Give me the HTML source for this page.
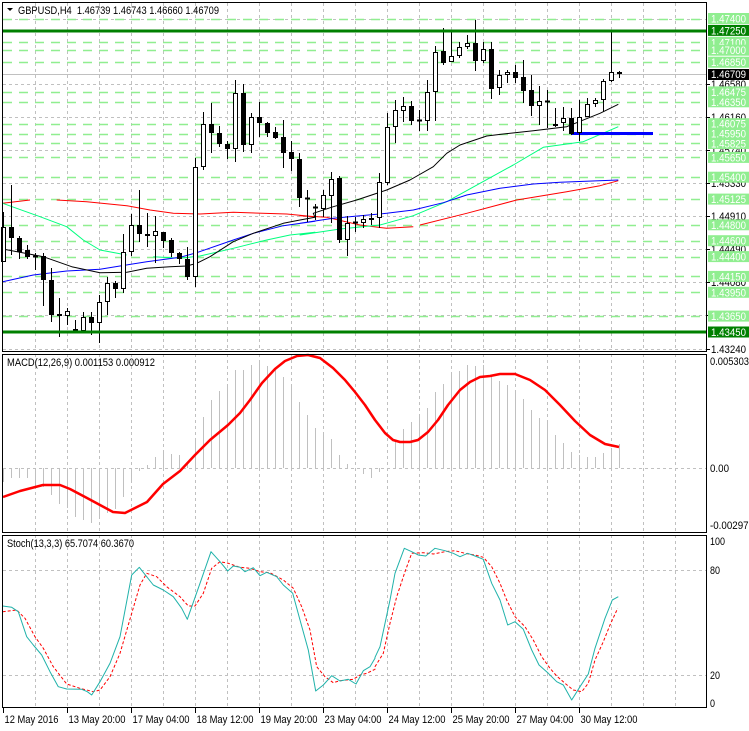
<!DOCTYPE html>
<html><head><meta charset="utf-8">
<style>
html,body{margin:0;padding:0;background:#fff;}
body{width:749px;height:731px;overflow:hidden;}
svg{display:block;font-family:"Liberation Sans",sans-serif;font-size:11px;}
</style></head>
<body>
<svg id="c" width="749" height="731" xmlns="http://www.w3.org/2000/svg"></svg>
<script>
var s=[];
function yp(p){return 18.5+(1.474-p)/0.000126;}
function L(x1,y1,x2,y2,c,w,d){s.push('<line x1="'+x1+'" y1="'+y1+'" x2="'+x2+'" y2="'+y2+'" stroke="'+c+'" stroke-width="'+(w||1)+'"'+(d?' stroke-dasharray="'+d+'"':'')+'/>');}
function T(x,y,t,c,len){s.push('<text x="'+x+'" y="'+y+'" fill="'+(c||'#000')+'"'+(len?' textLength="'+len+'" lengthAdjust="spacingAndGlyphs"':'')+'>'+t+'</text>');}
function P(pts,c,w,d){s.push('<polyline fill="none" points="'+pts.map(function(p){return p[0].toFixed(1)+','+p[1].toFixed(1)}).join(' ')+'" stroke="'+c+'" stroke-width="'+w+'"'+(d?' stroke-dasharray="'+d+'"':'')+' stroke-linejoin="round"/>');}
var GR='#c0c0c0';
for(var x=35.5;x<706;x+=32){L(x,3,x,351,GR,1,'3 3');L(x,354,x,532,GR,1,'3 3');L(x,535,x,708,GR,1,'3 3');}
var gl=[1.474,1.4658,1.4616,1.4574,1.4533,1.4491,1.4449,1.4408,1.4366,1.4324];
gl.forEach(function(p){var y=Math.round(yp(p))+0.5;L(3,y,706,y,GR,1,'3 3');});
var gv=[1.474,1.471,1.47,1.4685,1.46475,1.4635,1.46075,1.4595,1.45825,1.4565,1.454,1.45125,1.448,1.446,1.444,1.4415,1.4395,1.4365];
gv.forEach(function(p){var y=Math.round(yp(p))+0.5;L(3,y,706,y,'#90ee90',1.5,'9 7');});
L(3,74.5,706,74.5,'#c0c0c0',1);
L(3,468.5,706,468.5,GR,1,'3 3');
L(3,570.5,706,570.5,GR,1,'3 3');L(3,675.5,706,675.5,GR,1,'3 3');
function z7(a){return a.map(function(p){return [p[0]/3,60+p[1]/3];});}
function z8(a){return a.map(function(p){return [300+p[0]/3,10+p[1]/3];});}
P(z7([[8,430],[90,420]]),'#ff0000',1);
P(z7([[170,420],[260,425],[380,437],[450,450],[520,460],[600,462],[700,457],[860,462],[945,470]]).concat(z8([[0,617],[80,622],[180,645],[260,655],[340,650]])),'#ff0000',1);
P(z8([[360,645],[500,610],[650,570],[800,545],[900,527],[955,512]]),'#ff0000',1);
P(z7([[8,430],[120,470],[200,500],[250,540],[300,570],[380,585]]),'#00ff7f',1);
P(z7([[460,590],[540,595],[600,588],[700,565],[800,540],[870,525],[945,517]]).concat(z8([[0,675],[120,657],[240,645],[340,617],[440,575],[540,520],[640,465],[730,412],[850,395],[955,350]])),'#00ff7f',1);
P(z7([[8,665],[100,645],[200,633],[300,628],[360,618],[440,605],[540,592],[590,578],[700,540],[760,520],[850,497],[945,484]]).concat(z8([[0,640],[100,625],[260,610],[340,600],[430,578],[500,555],[600,535],[700,522],[780,517],[955,510]])),'#0000ff',1);
P(z7([[8,567],[130,590],[215,620],[300,638],[380,637],[440,625],[510,620],[560,618],[590,610],[630,590],[700,545],[760,520],[850,490],[900,480],[945,472]]).concat(z8([[40,610],[100,590],[170,570],[260,540],[330,510],[400,470],[440,430],[480,405],[560,378],[610,372],[700,362],[800,350],[900,310],[955,283]])),'#000',1);
L(571,133.5,653,133.5,'#0000ff',3);
var c7=[[455,607,500,607,0],[375,585,500,535,1],[528,597,535,575,1],[555,597,570,592,1],[578,630,588,592,1],[580,738,587,660,1],[625,785,660,765,1],[715,830,763,767,1],[745,795,753,767,0],[780,818,807,812,1],[757,815,772,812,0],[755,825,772,790,1],[705,848,727,790,0],[650,765,670,727,0],[663,715,670,686,1],[522,700,575,686,0],[462,588,495,575,0],[390,545,495,523,1],[460,560,523,528,1],[468,610,514,528,0],[515,565,517,542,1],[535,590,540,580,1],[575,612,580,598,1],[560,660,598,652,1],[295,680,322,652,0],[155,330,193,322,0],[130,278,193,220,1],[197,262,220,253,1],[243,297,253,268,1],[60,305,100,268,0],[72,275,100,256,1],[160,278,172,256,0],[125,232,170,190,1],[185,230,190,218,1],[200,237,217,233,1],[180,325,232,280,1],[243,332,277,296,1],[280,440,296,415,1],[390,485,413,418,1],[433,480,440,445,1]];
var c8=[[540,620,555,597,0],[485,640,508,557,0],[498,700,505,690,1],[617,738,640,690,0],[620,665,635,640,1],[615,655,627,640,0],[608,645,625,629,1],[488,655,515,625,0],[308,525,352,520,0],[270,398,300,352,0],[262,335,287,303,0],[272,345,287,332,1],[300,362,329,331,1],[210,362,247,332,0],[108,332,125,247,0],[55,165,123,158,1],[60,157,137,157,0],[97,145,112,137,0],[75,118,100,112,0],[30,182,100,152,1],[95,160,118,152,0],[95,268,118,237,1],[180,255,195,235,0],[180,220,187,195,0],[165,220,187,203,1],[150,278,202,242,1],[195,318,240,288,1],[228,345,273,287,0],[240,355,272,275,1],[295,350,343,347,1],[290,362,325,340,0],[295,375,325,373,1],[270,392,320,370,0],[265,320,283,320,0],[265,290,270,283,0],[208,305,213,270,0],[65,215,187,213,0],[182,205,186,191,1]];
var all=c7.map(function(c){return [60+c[0]/3,60+c[1]/3,60+c[2]/3,60+c[3]/3,c[4]];}).concat(c8.map(function(c){return [10+c[0]/3,10+c[1]/3,10+c[2]/3,10+c[3]/3,c[4]];}));
all.forEach(function(c,i){var cx=3.5+8*i;L(cx,Math.round(c[0]),cx,Math.round(c[1]),'#000',1);
 var t=Math.round(c[2]),b=Math.round(c[3]);
 if(b-t<2){L(cx-2.5,t+0.5,cx+2.5,t+0.5,'#000',2);}
 else if(c[4]) s.push('<rect x="'+(cx-2.5)+'" y="'+t+'" width="5" height="'+(b-t)+'" fill="#000"/>');
 else s.push('<rect x="'+(cx-2)+'" y="'+(t+0.5)+'" width="4" height="'+(b-t-1)+'" fill="#fff" stroke="#000"/>');});
L(3,31,706,31,'#008000',3);L(3,332,706,332,'#008000',3);
var h=[482,478,478,478,486,487,495,504,508,517,520,523,517,513,509,497,480,471,465,457,452,454,455,462,440,417,400,391,385,370,370,365,362,366,370,377,387,402,415,428,434,439,455,464,470,474,478,472,468,442,429,422,415,408,392,384,374,371,365,366,365,376,381,385,391,399,410,418,422,435,443,452,455,457,457,453,448,444];
h.forEach(function(v,i){var cx=3.5+8*i;L(cx,468,cx,v,'#c0c0c0',1);});
P([[3,497],[20,491],[43,485],[60,485],[70,489],[87,498],[100,505],[113,512],[125,513],[133,509],[147,502],[163,484],[180,471],[195,455],[210,440],[228,425],[240,413],[250,400],[262,383],[275,369],[285,361],[297,356],[308,355],[320,358],[333,368],[345,380],[355,392],[365,405],[375,420],[385,433],[393,440],[400,442],[410,442],[418,440],[428,432],[438,420],[448,405],[460,390],[470,382],[480,377],[490,376],[500,374],[515,374],[530,380],[545,390],[560,405],[575,421],[590,435],[605,444],[619,447]],'#ff0000',2.5);
function s5(a){return a.map(function(p){return [p[0]/3,530+p[1]/3];});}
function s6(a){return a.map(function(p){return [375+p[0]/3,530+p[1]/3];});}
P(s5([[8,245],[50,240],[75,265],[105,320],[130,355],[160,410],[200,462],[240,475],[280,485],[300,480],[330,440],[360,370],[395,250],[420,165],[440,130],[470,140],[500,170],[540,200],[565,228],[585,228],[610,190],[635,115],[660,95],[685,100],[720,112],[750,115],[780,125],[810,128],[850,150],[880,175],[905,230],[930,300],[950,410],[975,440],[1000,458],[1020,452],[1060,448],[1080,435],[1100,430],[1125,418]]).concat(s6([[0,410],[25,370],[45,280],[65,200],[90,125],[110,70],[145,68],[175,72],[210,65],[240,62],[270,70],[300,75],[325,82],[350,110],[375,160],[395,210],[420,260],[450,290],[475,330],[500,380],[525,415],[545,438],[570,460],[595,480],[620,485],[640,460],[660,390],[685,335],[705,285],[728,235]])),'#ff0000',1,'3 2');
P(s5([[8,228],[35,232],[55,245],[80,320],[100,345],[125,375],[150,425],[175,470],[200,477],[245,478],[262,485],[275,495],[300,455],[330,400],[360,320],[395,135],[418,112],[440,140],[460,165],[490,180],[520,200],[545,235],[562,268],[600,160],[633,65],[660,95],[683,123],[700,108],[720,112],[735,125],[760,113],[780,137],[800,127],[830,140],[850,165],[878,190],[900,270],[925,360],[947,483],[970,465],[995,437],[1020,453],[1045,448],[1068,462],[1090,422],[1110,410],[1125,385]]).concat(s6([[0,382],[15,350],[45,210],[60,130],[88,55],[110,65],[130,75],[152,78],[180,55],[210,62],[235,70],[255,80],[278,70],[300,78],[325,88],[350,160],[375,210],[398,285],[420,275],[445,298],[470,360],[492,405],[520,430],[545,455],[565,465],[590,510],[615,470],[640,432],[660,355],[690,265],[712,210],[730,200]])),'#20b2aa',1);
s.push('<rect x="2.5" y="2.5" width="704" height="349" fill="none" stroke="#000"/>');
s.push('<rect x="2.5" y="354.5" width="704" height="178" fill="none" stroke="#000"/>');
s.push('<rect x="2.5" y="535.5" width="704" height="172" fill="none" stroke="#000"/>');
s.push('<path d="M7,8 L13,8 L10,11 Z" fill="#000"/>');
T(18,14,'GBPUSD,H4&#160;&#160;1.46739 1.46743 1.46660 1.46709','#000',201);
T(7,366,'MACD(12,26,9) 0.001153 0.000912','#000',148);
T(7,547,'Stoch(13,3,3) 65.7074 60.3670','#000',127);
gl.slice(1).forEach(function(p){var y=Math.round(yp(p));L(706,y+0.5,710,y+0.5,'#000',1);T(711,y+4,p.toFixed(5),'#000',35);});
gv.forEach(function(p){var y=yp(p);s.push('<rect x="708" y="'+(y-5.5).toFixed(1)+'" width="41" height="11" fill="#90ee90"/>');T(711,y+4,p.toFixed(5),'#fff',35);});
[[1.4725,'#008000'],[1.4345,'#008000']].forEach(function(a){var y=yp(a[0]);s.push('<rect x="708" y="'+(y-5.5).toFixed(1)+'" width="41" height="11" fill="'+a[1]+'"/>');T(711,y+4,a[0].toFixed(5),'#fff',35);});
s.push('<rect x="708" y="69" width="41" height="11" fill="#000"/>');T(711,78,'1.46709','#fff',35);
T(710,365,'0.005303','#000',39);T(710,472,'0.00','#000',19);T(710,529,'-0.002975','#000',44);
T(710,545,'100','#000',15);T(710,574,'80','#000',10);T(710,679,'20','#000',10);T(710,707,'0','#000',5);
var tl=['12 May 2016','13 May 20:00','17 May 04:00','18 May 12:00','19 May 20:00','23 May 04:00','24 May 12:00','25 May 20:00','27 May 04:00','30 May 12:00'];
tl.forEach(function(t,i){var x=3.5+64*i;L(x,708,x,713,'#000',1);T(x+1,723,t,'#000',i==0?54:57);});
document.getElementById('c').innerHTML=s.join('');
</script>
</body></html>
